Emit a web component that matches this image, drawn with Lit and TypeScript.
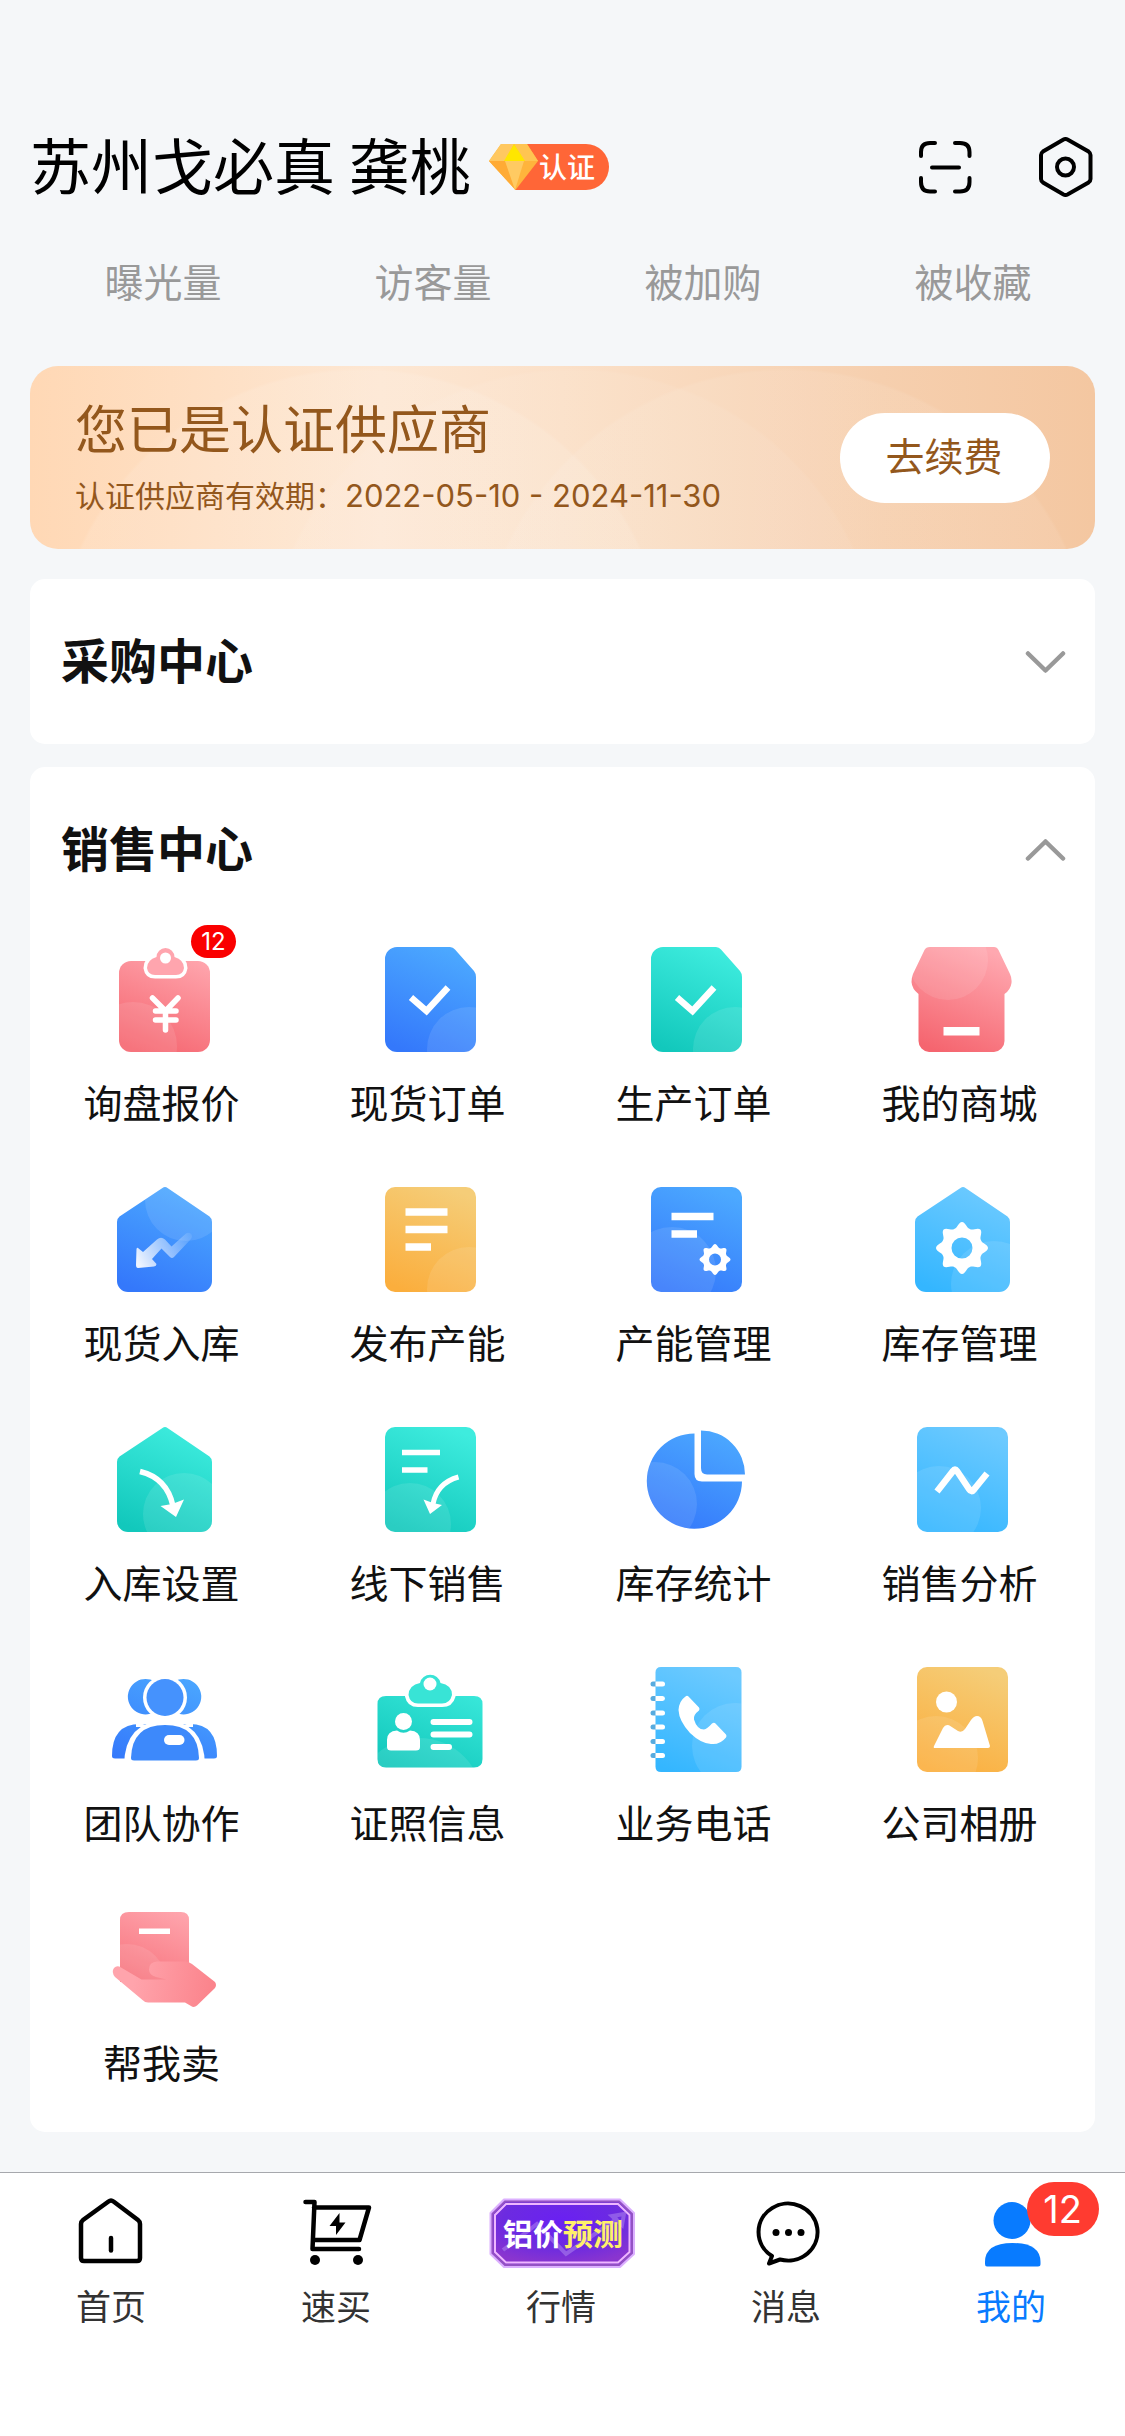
import { LitElement, html, svg, css, nothing, type TemplateResult, type SVGTemplateResult } from "lit";
import { customElement, state } from "lit/decorators.js";

type Palette = "pink" | "blue" | "teal" | "orange" | "sky";

const COLORS: Record<Palette, [string, string]> = {
  pink: ["#f5656f", "#ffa8b0"],
  blue: ["#3478fb", "#4ca9ff"],
  teal: ["#12c8bc", "#3eecde"],
  orange: ["#fbae3d", "#f5cd78"],
  sky: ["#34b6ff", "#6dcaff"],
};

interface MenuItem {
  id: string;
  label: string;
  icon: () => TemplateResult;
  badge?: number;
}

const SHEET = "M26 7H97A10 10 0 0 1 107 17V102A10 10 0 0 1 97 112H26A10 10 0 0 1 16 102V17A10 10 0 0 1 26 7Z";
const CUT_SHEET = "M28 7H81Q84 7 86 9.500L105 31Q107 33.500 107 37V100A12 12 0 0 1 95 112H28A12 12 0 0 1 16 100V19A12 12 0 0 1 28 7Z";
const HOUSE = "M59.500 8Q62 6 64.500 8L106.500 36.500Q109 38.500 109 42V101A11 11 0 0 1 98 112H25A11 11 0 0 1 14 101V42Q14 38.500 16.500 36.500Z";

/** Closed outline of an eight-toothed gear with a round hole. */
function gearPath(cx: number, cy: number, outer: number, hole: number): string {
  const steps = 128;
  let d = "";
  for (let i = 0; i < steps; i++) {
    const a = (i / steps) * Math.PI * 2;
    const r = outer * (0.79 + 0.21 * Math.pow((1 + Math.cos(a * 8)) / 2, 1.4));
    d += `${i ? "L" : "M"}${(cx + r * Math.cos(a)).toFixed(2)} ${(cy + r * Math.sin(a)).toFixed(2)}`;
  }
  return `${d}ZM${cx - hole} ${cy}a${hole} ${hole} 0 1 0 ${hole * 2} 0a${hole} ${hole} 0 1 0 ${-hole * 2} 0Z`;
}

/** A gradient shape with an optional pale disc inside it and white details on top. */
function tile(
  id: string,
  palette: Palette,
  shape: string,
  disc: [number, number, number] | null,
  detail: SVGTemplateResult,
): TemplateResult {
  const [dark, light] = COLORS[palette];
  return html`<svg class="icon" viewBox="0 0 120 120" aria-hidden="true">
    <defs>
      <linearGradient id="${id}-fill" gradientUnits="userSpaceOnUse" x1="38" y1="112" x2="82" y2="8">
        <stop offset="0" stop-color=${dark} />
        <stop offset="1" stop-color=${light} />
      </linearGradient>
      <clipPath id="${id}-clip"><path d=${shape} /></clipPath>
    </defs>
    <path d=${shape} fill="url(#${id}-fill)" />
    ${disc
      ? svg`<circle cx=${disc[0]} cy=${disc[1]} r=${disc[2]} fill="#fff" fill-opacity=".1" clip-path="url(#${id}-clip)" />`
      : nothing}
    ${detail}
  </svg>`;
}

const check = svg`<path d="M42 57.500L57.500 71L79 47.500" fill="none" stroke="#fff" stroke-width="6.500" />`;

const ITEMS: MenuItem[] = [
  {
    id: "inquiry",
    label: "询盘报价",
    badge: 12,
    icon: () =>
      tile("inquiry", "pink", "M28 21H95A12 12 0 0 1 107 33V100A12 12 0 0 1 95 112H28A12 12 0 0 1 16 100V33A12 12 0 0 1 28 21Z", [30, 106, 44], svg`
        <path d="M53 17A9.500 9.500 0 0 1 72 17Q81 20 81 28Q80 35 73 35H52Q45 35 44 28Q44 20 53 17Z" fill="#fff" stroke="#fff" stroke-width="7" />
        <path d="M53.500 17A9 9 0 0 1 71.500 17Q81 20 81 28Q80 35 73 35H52Q45 35 44 28Q44 20 53.500 17Z" fill="#ffa5ae" />
        <circle cx="62.500" cy="18" r="5.500" fill="#fff" />
        <path d="M49.500 58L62.500 71L75 58M52.500 71H73M52.500 80H73M62.500 71V90" fill="none" stroke="#fff" stroke-width="5.500" stroke-linecap="round" stroke-linejoin="round" />`),
  },
  { id: "stock-order", label: "现货订单", icon: () => tile("stock-order", "blue", CUT_SHEET, [100, 109, 42], check) },
  { id: "make-order", label: "生产订单", icon: () => tile("make-order", "teal", CUT_SHEET, [100, 109, 42], check) },
  {
    id: "mall",
    label: "我的商城",
    icon: () =>
      tile("mall", "pink", "M29 7H93Q96 7 97.500 10L109 34Q111 38 110.500 43Q109.500 50 103.500 54V101A11 11 0 0 1 93 112H28A11 11 0 0 1 17.500 101V54Q11 49 10.500 42Q10.500 38 12 34L23.500 10Q25 7 29 7Z", [47, 20, 40], svg`
        <rect x="42.500" y="87" width="36" height="8.500" fill="#fff" />`),
  },
  {
    id: "stock-in",
    label: "现货入库",
    icon: () =>
      tile("stock-in", "blue", HOUSE, [83, 20, 41], svg`
        <defs>
          <linearGradient id="trend" gradientUnits="userSpaceOnUse" x1="36" y1="84" x2="88" y2="54">
            <stop offset="0" stop-color="#fff" stop-opacity=".92" />
            <stop offset="1" stop-color="#fff" stop-opacity=".08" />
          </linearGradient>
        </defs>
        <path d="M35 68L40 72L54 59.500Q58 56 62 59.500L68.500 66.500L83 53.500Q86 52 88 54Q90 56 88 59L71 77Q69 79 67 77L58.500 68.500L49 79L53.500 84Q53.500 86 51 86.500L35 88Q33 88 33 85L33.500 69Q34 67 35 68Z" fill="url(#trend)" />`),
  },
  {
    id: "publish",
    label: "发布产能",
    icon: () =>
      tile("publish", "orange", SHEET, [100, 109, 42], svg`
        <path d="M36.500 32H78.500M36.500 49.500H78.500M36.500 67H62" stroke="#fff" stroke-width="7.500" />`),
  },
  {
    id: "capacity",
    label: "产能管理",
    icon: () =>
      tile("capacity", "blue", SHEET, [37, 91, 44], svg`
        <path d="M36.500 36.500H78.500M36.500 54H62" stroke="#fff" stroke-width="7.500" />
        <path d=${gearPath(80, 79.5, 15.5, 6)} fill="#fff" fill-rule="evenodd" />`),
  },
  {
    id: "stock-manage",
    label: "库存管理",
    icon: () =>
      tile("stock-manage", "sky", HOUSE, [93, 104, 43], svg`
        <path d=${gearPath(61, 68, 26, 10.5)} fill="#fff" fill-rule="evenodd" />`),
  },
  {
    id: "stock-settings",
    label: "入库设置",
    icon: () =>
      tile("stock-settings", "teal", HOUSE, [81, 94, 41], svg`
        <path d="M37 51.500Q64 58 70 86" fill="none" stroke="#fff" stroke-width="5.500" />
        <path d="M57.500 86L69 84L81 79.500L73 97Z" fill="#fff" />`),
  },
  {
    id: "offline-sale",
    label: "线下销售",
    icon: () =>
      tile("offline-sale", "teal", SHEET, [41, 104, 41], svg`
        <path d="M33 32.500H71M33 50H58.500" stroke="#fff" stroke-width="5.500" />
        <path d="M89.500 57Q68 63 64 84" fill="none" stroke="#fff" stroke-width="5" />
        <path d="M54.500 79.500L64 83L73 85L61 94Z" fill="#fff" />`),
  },
  {
    id: "stock-stats",
    label: "库存统计",
    icon: () =>
      tile("stock-stats", "blue", "M59.500 13.500A47.600 47.600 0 1 0 107 61.500H67Q59.500 61.500 59.500 54ZM66 10.500A44 44 0 0 1 110 54.500H72Q66 54.500 66 48Z", [20, 84, 42], svg``),
  },
  {
    id: "sale-analysis",
    label: "销售分析",
    icon: () =>
      tile("sale-analysis", "sky", SHEET, [38, 88, 42], svg`
        <path d="M36 71.500L52 51Q54 48 56 51L68 69Q70.500 73 73 69.500L86 53.500" fill="none" stroke="#fff" stroke-width="6.500" />`),
  },
  {
    id: "team",
    label: "团队协作",
    icon: () =>
      tile("team", "blue", "M42.500 19A17.700 17.700 0 1 0 42.600 19ZM80.500 19A17.700 17.700 0 1 0 80.600 19ZM9 96Q9 64 37 64H87Q114 64 114 96Q114 98.500 111 98.500H12Q9 98.500 9 96Z", null, svg`
        <circle cx="62" cy="37.500" r="22" fill="#fff" />
        <path d="M33 62Q62 72 90 62V67H33Z" fill="#fff" />
        <path d="M21 105Q22 61 62 61Q101 61 102 105Z" fill="#fff" />
        <circle cx="62" cy="37.500" r="18.500" fill="#4592fd" />
        <path d="M28 98Q29 65 62 65Q95 65 96 98Q96 100.500 93 100.500H31Q28 100.500 28 98Z" fill="#3d89fb" />
        <rect x="61" y="75" width="20.500" height="10" rx="5" fill="#fff" />`),
  },
  {
    id: "license",
    label: "证照信息",
    icon: () =>
      tile("license", "teal", "M17 36H105Q113.500 36 113.500 44V99Q113.500 107.500 105 107.500H17Q8.500 107.500 8.500 99V44Q8.500 36 17 36Z", [50, 142, 64], svg`
        <path d="M51 24A10.500 10.500 0 0 1 71.500 24Q83 26 83 36Q81 43.500 73 43.500H49Q41 43.500 39.500 36Q40 26 51 24Z" fill="#fff" stroke="#fff" stroke-width="7" />
        <path d="M51 23A10.500 10.500 0 0 1 71.500 23Q83 25 83 35Q81 43.500 73 43.500H49Q41 43.500 39.500 35Q40 25 51 23Z" fill="#38e4d6" />
        <circle cx="61" cy="24" r="6.500" fill="#fff" />
        <circle cx="34.500" cy="61.500" r="8.500" fill="#fff" />
        <path d="M18 80Q18 71 28 70.500Q34.500 75 41 70.500Q51 71 51 80V87Q51 90.500 47 90.500H22Q18 90.500 18 87Z" fill="#fff" />
        <path d="M64.500 62H100.500M64.500 74.500H100.500M64.500 87H80" stroke="#fff" stroke-width="6" stroke-linecap="round" />`),
  },
  {
    id: "phone",
    label: "业务电话",
    icon: () =>
      tile("phone", "sky", "M26 7H101Q106.500 7 106.500 12.500V106.500Q106.500 112 101 112H26Q20.500 112 20.500 106.500V12.500Q20.500 7 26 7Z", [100, 86, 43], svg`
        ${[24, 38.5, 53, 67, 81.5, 95.5].map(
          (y) => svg`<path d="M18 ${y}H20.500" stroke="#57abdf" stroke-width="5" stroke-linecap="round" />
            <path d="M20.500 ${y - 2.5}H27.500a2.500 2.500 0 0 1 0 5H20.500Z" fill="#fff" />`,
        )}
        <path d="M50.500 36.500Q52 35 53.500 36.500L64 47.500Q65 49 64 50.500Q58 55 59 59.500Q62 69.500 69 69.500Q72 69 77 63.500Q79 62 80.500 63.500L91 74.500Q92 76 91 77.500Q85 85 76 84Q66 83.500 55 73Q44 61 43.500 50Q44 41 50.500 36.500Z" fill="#fff" />`),
  },
  {
    id: "album",
    label: "公司相册",
    icon: () =>
      tile("album", "orange", SHEET, [35, 98, 42], svg`
        <circle cx="45.500" cy="42" r="10.500" fill="#fff" />
        <path d="M33 86L42 68Q45 63 50 66.500L57 71Q61 73 64 69L70 60Q73 56 76 56Q80 56 81.500 61L89 86Q89 88 87 88H34Q32 88 33 86Z" fill="#fff" />`),
  },
  {
    id: "help-sell",
    label: "帮我卖",
    icon: () =>
      tile("help-sell", "pink", "M26 12H78Q86 12 86 20V82H17V20Q17 12 26 12Z", [24, 84, 40], svg`
        <defs>
          <linearGradient id="hand" gradientUnits="userSpaceOnUse" x1="30" y1="80" x2="108" y2="92">
            <stop offset="0" stop-color="#ffa4ac" />
            <stop offset="1" stop-color="#fb848c" />
          </linearGradient>
        </defs>
        <path d="M36 28.500H67V34H36Z" fill="#fff" />
        <path d="M11 68Q14 65 18 67.500L38.500 79.500H63.500L53 77Q46 75 46 69.500Q46 62 54 61.500H82Q86 61.500 89 64L112 82Q114 85 112 88L94 105.500Q91 108 88 106L82 102.500H45Q42 102.500 39.500 100L12 77Q8 72 11 68Z" fill="url(#hand)" />`),
  },
];

const chevron = (up: boolean) => html`<svg class="chevron" viewBox="0 0 42 24" aria-hidden="true">
  <path d=${up ? "M4 20.5L21.500 3.500L39 20.5" : "M4 3.500L21.500 20.500L39 3.500"} fill="none" stroke="#999" stroke-width="4.500" stroke-linecap="round" stroke-linejoin="round" />
</svg>`;

const TAB_ICONS = {
  home: html`<svg class="tab-icon" viewBox="0 0 72 72" aria-hidden="true">
    <path d="M4 28Q4 25.500 6 24L31.500 5.500Q34 3.500 36.500 5.500L61 24Q63 25.500 63 28V62Q63 65 60 65H7Q4 65 4 62Z" fill="none" stroke="#000" stroke-width="4.500" stroke-linejoin="round" />
    <path d="M34 42V54.500" stroke="#000" stroke-width="4.500" stroke-linecap="round" />
  </svg>`,
  buy: html`<svg class="tab-icon" viewBox="0 0 72 72" aria-hidden="true">
    <path d="M3.500 6H12.500L10.500 53H57M12 11.500H67L57.500 44H11" fill="none" stroke="#000" stroke-width="4.500" stroke-linecap="round" stroke-linejoin="round" />
    <path d="M37.500 17L27.500 30H34V39L43.500 26.500H37.500Z" />
    <circle cx="13" cy="64" r="5" /><circle cx="56" cy="64" r="5" />
  </svg>`,
  market: html`<svg class="tab-icon tab-icon-wide" viewBox="0 0 150 72" aria-hidden="true">
    <defs>
      <radialGradient id="market-fill" cx=".5" cy=".3" r=".7">
        <stop offset="0" stop-color="#6a20f2" />
        <stop offset=".6" stop-color="#6c2be0" />
        <stop offset="1" stop-color="#8a35cf" />
      </radialGradient>
    </defs>
    <path d="M16 3.500H132L146 17V58L132 71H16L2.500 58V17Z" fill="#d59bff" stroke="#dcb0ff" stroke-width="2" stroke-linejoin="round" />
    <path d="M17 5.500H131L144 18V57L131 69H17L4.500 57V18Z" fill="url(#market-fill)" stroke="#9352c4" stroke-width="2" />
    <path d="M18 8H130L141.500 19V56L130 66.500H18L7 56V19Z" fill="none" stroke="#eeb6ff" stroke-width="2" />
    <path d="M15 54L49 28L78 58L130 22M136 18L124 20L134 29Z" fill="none" stroke="#b48cf0" stroke-opacity=".5" stroke-width="4" />
    <text class="market-text" x="15" y="49"><tspan fill="#fff">铝价</tspan><tspan fill="#fff06a">预测</tspan></text>
  </svg>`,
  message: html`<svg class="tab-icon" viewBox="0 0 72 72" aria-hidden="true">
    <path d="M20 60A29.500 28.500 0 1 1 28 63.500L17 67.500Z" fill="none" stroke="#000" stroke-width="4" stroke-linejoin="round" />
    <circle cx="24" cy="36.500" r="3.500" /><circle cx="36.500" cy="36.500" r="3.500" /><circle cx="49" cy="36.500" r="3.500" />
  </svg>`,
  me: html`<svg class="tab-icon" viewBox="0 0 72 72" aria-hidden="true">
    <g fill="#087bff">
      <circle cx="35" cy="24.500" r="18.500" />
      <path d="M8 66Q8 47 35.500 47Q63.500 47 63.500 66V68Q63.500 70.500 61 70.500H10Q8 70.500 8 68Z" />
    </g>
  </svg>`,
};

const TABS: { id: keyof typeof TAB_ICONS; label: string; badge?: number }[] = [
  { id: "home", label: "首页" },
  { id: "buy", label: "速买" },
  { id: "market", label: "行情" },
  { id: "message", label: "消息" },
  { id: "me", label: "我的", badge: 12 },
];

@customElement("app-root")
export class AppRoot extends LitElement {
  @state() private buyOpen = false;
  @state() private sellOpen = true;

  static styles = css`
    :host {
      display: flex;
      flex-direction: column;
      min-height: 100vh;
      background: #f5f7f9;
      color: #111;
      font-family: "Noto Sans CJK SC", sans-serif;
      font-size: 39px;
      line-height: 56px;
    }
    * {
      box-sizing: border-box;
    }
    h1,
    h2,
    p,
    ul {
      margin: 0;
      padding: 0;
      font-weight: 400;
      list-style: none;
    }
    a {
      color: inherit;
      text-decoration: none;
    }
    button {
      border: 0;
      padding: 0;
      background: none;
      color: inherit;
      font: inherit;
      cursor: pointer;
    }
    svg {
      display: block;
      flex: none;
    }
    .head {
      display: flex;
      align-items: center;
      gap: 18px;
      padding: 122px 30px 0;
    }
    .name {
      padding-bottom: 6px;
      color: #000;
      font-size: 61px;
      line-height: 84px;
      white-space: nowrap;
    }
    .cert {
      width: 120px;
      height: 46px;
    }
    .cert-text {
      font-size: 28px;
      font-weight: 500;
      fill: #fff;
    }
    .tools {
      display: flex;
      gap: 60px;
      margin-left: auto;
    }
    .tool-icon {
      width: 60px;
      height: 60px;
    }
    .stats {
      display: grid;
      grid-template-columns: repeat(4, 1fr);
      padding: 40px 17px 58px 28px;
      color: #999;
      text-align: center;
    }
    .body {
      display: flex;
      flex-direction: column;
      padding: 0 30px 40px;
    }
    .banner {
      display: flex;
      align-items: center;
      justify-content: space-between;
      margin-bottom: 30px;
      padding: 0 45px;
      border-radius: 28px;
      color: #93571c;
      background:
        radial-gradient(circle 310px at 31% 312px, rgba(255, 255, 255, 0.1) 99%, transparent),
        radial-gradient(circle 310px at 51% 312px, rgba(255, 255, 255, 0.06) 99%, transparent),
        radial-gradient(circle 310px at 71% 312px, rgba(255, 255, 255, 0.08) 99%, transparent),
        linear-gradient(90deg, #ffd8b5 0%, #fde7d3 33%, #fbe0c8 50%, #f6cfae 80%, #f4c7a1 100%);
    }
    .banner-text {
      padding: 25px 0 32px;
    }
    .banner-title {
      font-size: 52px;
      line-height: 72px;
    }
    .banner-date {
      margin-top: 8px;
      font-size: 30px;
      line-height: 46px;
    }
    .range {
      font-family: Inter, sans-serif;
      font-size: 31px;
      line-height: 31px;
    }
    .renew {
      width: 210px;
      height: 90px;
      padding: 0 2px 8px 0;
      border-radius: 45px;
      background: #fff;
    }
    .card {
      border-radius: 15px;
      background: #fff;
    }
    .card + .card {
      margin-top: 23px;
    }
    .card-head {
      display: flex;
      align-items: center;
      justify-content: space-between;
      width: 100%;
      height: 165px;
      padding: 0 29px 0 31px;
      font-size: 48px;
      font-weight: 700;
      line-height: 66px;
    }
    .card-title {
      padding-bottom: 8px;
    }
    .chevron {
      width: 42px;
      height: 24px;
    }
    .menu {
      display: grid;
      grid-template-columns: repeat(4, 1fr);
      padding-right: 1px;
    }
    .item {
      display: flex;
      flex-direction: column;
      align-items: center;
      gap: 13px;
      padding: 8px 0 43px;
    }
    .item-label {
      padding-right: 3px;
    }
    .figure {
      position: relative;
    }
    .icon {
      width: 120px;
      height: 120px;
    }
    .count {
      position: absolute;
      top: -15px;
      left: 88px;
      min-width: 45px;
      border-radius: 17px;
      background: #fa0000;
      color: #fff;
      font-family: Inter, sans-serif;
      font-size: 24px;
      line-height: 33px;
      text-align: center;
    }
    .tabs {
      display: grid;
      grid-template-columns: repeat(5, 1fr);
      margin-top: auto;
      padding-bottom: 106px;
      border-top: 1px solid #a6a8ad;
      background: #fff;
      color: #333;
      font-size: 35px;
      line-height: 50px;
    }
    .tab {
      display: flex;
      flex-direction: column;
      align-items: center;
      gap: 12px;
      padding-top: 23px;
    }
    .tab-label {
      padding-right: 3px;
    }
    .tab-on {
      color: #087bff;
    }
    .tab-icon {
      width: 72px;
      height: 72px;
    }
    .tab-icon-wide {
      width: 150px;
    }
    .market-text {
      font-size: 30px;
      font-weight: 700;
    }
    .tab .count {
      top: -14px;
      left: 50px;
      min-width: 72px;
      border-radius: 27px;
      background: #ff3b30;
      font-size: 38px;
      line-height: 54px;
    }
  `;

  render() {
    return html`
      <header class="head">
        <h1 class="name">苏州戈必真 龚桃</h1>
        <svg class="cert" viewBox="0 0 120 46" role="img" aria-label="认证">
          <path d="M26 0H97A23 23 0 0 1 97 46H26Z" fill="#ff6637" />
          <path d="M12 0H38L49 17L26.500 46L0 17Z" fill="#ffb43c" />
          <path d="M12 0H25L16 17H0Z" fill="#ffc860" />
          <path d="M25 0H38L49 17H35Z" fill="#ffc552" />
          <path d="M0 17H16L26.500 46Z" fill="#ffab35" />
          <path d="M16 17H35L26 46Z" fill="#ffca62" />
          <path d="M25 0L36 17H15Z" fill="#ffe600" />
          <text class="cert-text" x="50" y="34">认证</text>
        </svg>
        <div class="tools">
          <button aria-label="扫一扫">
            <svg class="tool-icon" viewBox="0 0 60 60" aria-hidden="true">
              <path d="M6 19V15Q6 6 15 6H20M40 6H45Q54.500 6 54.500 15V19M54.500 41V45Q54.500 54.500 45 54.500H40M20 54.500H15Q6 54.500 6 45V41M17 30.500H44" fill="none" stroke="#000" stroke-width="4" stroke-linecap="round" stroke-linejoin="round" />
            </svg>
          </button>
          <button aria-label="设置">
            <svg class="tool-icon" viewBox="0 0 60 60" aria-hidden="true">
              <path d="M28.500 2.500Q30.500 1.500 32.500 2.500L53.500 14.500Q55.500 16 55.500 18V42Q55.500 44 53.500 45.500L32.500 57.500Q30.500 58.500 28.500 57.500L8 45.500Q6 44 6 42V18Q6 16 8 14.500Z" fill="none" stroke="#000" stroke-width="4" />
              <circle cx="30.500" cy="30" r="8.500" fill="none" stroke="#000" stroke-width="4" />
            </svg>
          </button>
        </div>
      </header>
      <ul class="stats">
        ${["曝光量", "访客量", "被加购", "被收藏"].map((s) => html`<li>${s}</li>`)}
      </ul>
      <main class="body">
        <section class="banner">
          <div class="banner-text">
            <h2 class="banner-title">您已是认证供应商</h2>
            <p class="banner-date">认证供应商有效期：<span class="range">2022-05-10 - 2024-11-30</span></p>
          </div>
          <button class="renew">去续费</button>
        </section>
        <section class="card">
          <button class="card-head" aria-expanded=${this.buyOpen} @click=${() => (this.buyOpen = !this.buyOpen)}>
            <span class="card-title">采购中心</span>${chevron(this.buyOpen)}
          </button>
        </section>
        <section class="card">
          <button class="card-head" aria-expanded=${this.sellOpen} @click=${() => (this.sellOpen = !this.sellOpen)}>
            <span class="card-title">销售中心</span>${chevron(this.sellOpen)}
          </button>
          ${this.sellOpen
            ? html`<div class="menu">
                ${ITEMS.map(
                  (item) => html`<a class="item" href="#${item.id}">
                    <span class="figure">
                      ${item.icon()}${item.badge ? html`<span class="count">${item.badge}</span>` : nothing}
                    </span>
                    <span class="item-label">${item.label}</span>
                  </a>`,
                )}
              </div>`
            : nothing}
        </section>
      </main>
      <nav class="tabs">
        ${TABS.map(
          (tab) => html`<a class="tab ${tab.id === "me" ? "tab-on" : ""}" href="#${tab.id}">
            <span class="figure">
              ${TAB_ICONS[tab.id]}${tab.badge ? html`<span class="count">${tab.badge}</span>` : nothing}
            </span>
            <span class="tab-label">${tab.label}</span>
          </a>`,
        )}
      </nav>
    `;
  }
}
